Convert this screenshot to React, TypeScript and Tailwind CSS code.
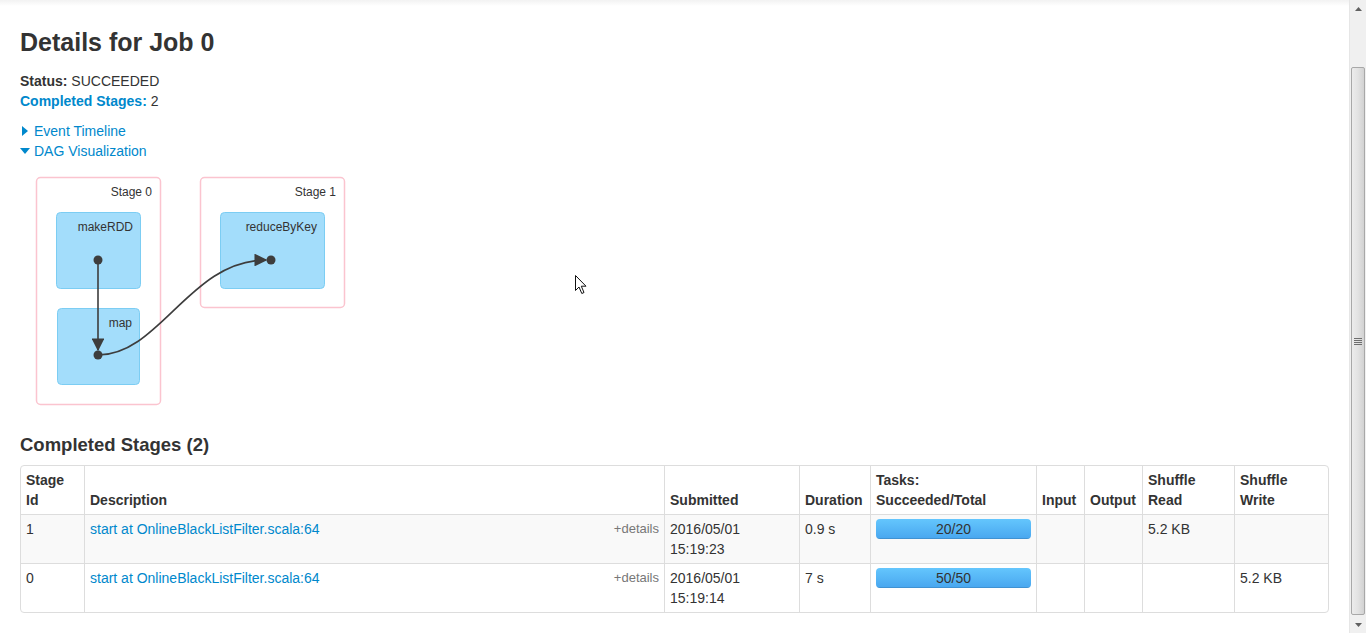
import React from 'react';

/**
 * Spark UI - job details page, scrolled a little so the navbar shadow shows.
 */

type Stage = {
  id: string;
  desc: string;
  submitted: [string, string];
  duration: string;
  done: number;
  total: number;
  shuffleRead: string;
  shuffleWrite: string;
};

const stages: Stage[] = [
  {
    id: '1',
    desc: 'start at OnlineBlackListFilter.scala:64',
    submitted: ['2016/05/01', '15:19:23'],
    duration: '0.9 s',
    done: 20,
    total: 20,
    shuffleRead: '5.2 KB',
    shuffleWrite: '',
  },
  {
    id: '0',
    desc: 'start at OnlineBlackListFilter.scala:64',
    submitted: ['2016/05/01', '15:19:14'],
    duration: '7 s',
    done: 50,
    total: 50,
    shuffleRead: '',
    shuffleWrite: '5.2 KB',
  },
];

function DagViz() {
  return (
    <svg width="340" height="240" viewBox="20 170 340 240" className="block">
      <defs>
        <marker id="arrow" viewBox="0 0 10 10" refX="9" refY="5" markerWidth="8" markerHeight="8" orient="auto">
          <path d="M0,0 L10,5 L0,10 z" fill="#3d3d3d" />
        </marker>
      </defs>
      {/* stage clusters */}
      <rect x="36.5" y="177.5" width="124" height="227" rx="4" fill="white" stroke="#fbc4cf" strokeWidth="1.5" />
      <rect x="200.5" y="177.5" width="144" height="130" rx="4" fill="white" stroke="#fbc4cf" strokeWidth="1.5" />
      <text x="152" y="195.5" textAnchor="end" fontSize="12" fill="#333">Stage 0</text>
      <text x="336" y="195.5" textAnchor="end" fontSize="12" fill="#333">Stage 1</text>

      {/* rdd nodes */}
      <rect x="56.5" y="212.5" width="84" height="76" rx="4" fill="#a3ddfb" stroke="#7ccdf3" />
      <rect x="57.5" y="308.5" width="82" height="76" rx="4" fill="#a3ddfb" stroke="#7ccdf3" />
      <rect x="220.5" y="212.5" width="104" height="76" rx="4" fill="#a3ddfb" stroke="#7ccdf3" />
      <text x="133" y="231" textAnchor="end" fontSize="12" fill="#333">makeRDD</text>
      <text x="132" y="327" textAnchor="end" fontSize="12" fill="#333">map</text>
      <text x="317" y="231" textAnchor="end" fontSize="12" fill="#333">reduceByKey</text>

      {/* edges */}
      <path d="M98,260 L98,350" stroke="#3d3d3d" strokeWidth="1.6" fill="none" markerEnd="url(#arrow)" />
      <path d="M98,355 C160,355 190,260 266,260" stroke="#3d3d3d" strokeWidth="1.6" fill="none" markerEnd="url(#arrow)" />
      <circle cx="98" cy="260" r="4.5" fill="#3d3d3d" />
      <circle cx="98" cy="355" r="4.5" fill="#3d3d3d" />
      <circle cx="271" cy="260" r="4.5" fill="#3d3d3d" />
    </svg>
  );
}

function Caret({ open }: { open: boolean }) {
  return (
    <span className="inline-flex w-[14px] items-center">
      {open ? (
        <svg width="10" height="6" viewBox="0 0 10 6">
          <path d="M0,0 L10,0 L5,6 z" fill="#0088cc" />
        </svg>
      ) : (
        <svg width="6" height="10" viewBox="0 0 6 10" className="ml-[2px]">
          <path d="M0,0 L6,5 L0,10 z" fill="#0088cc" />
        </svg>
      )}
    </span>
  );
}

function ProgressBar({ done, total }: { done: number; total: number }) {
  return (
    <div className="relative h-[20px] rounded-[4px] overflow-hidden bg-[#f5f5f5]">
      <div
        className="h-full bg-gradient-to-b from-[#64c6fd] to-[#48a6ef] shadow-[inset_0_-1px_0_rgba(0,0,0,0.12)]"
        style={{ width: `${(done / total) * 100}%` }}
      />
      <span className="absolute inset-0 text-center leading-[20px] text-[#333]">
        {done}/{total}
      </span>
    </div>
  );
}

function Scrollbar() {
  return (
    <div className="w-[17px] h-full flex flex-col bg-[#f0f0f0] border-l border-[#e6e6e6]">
      <div className="h-[17px] flex items-center justify-center">
        <svg width="7" height="4" viewBox="0 0 7 4">
          <path d="M0,4 L3.5,0 L7,4 z" fill="#606060" />
        </svg>
      </div>
      <div className="flex-1 flex flex-col">
        <div className="h-[50px]" />
        <div className="flex-1 mx-[1px] mb-[1px] rounded-[2px] border border-[#a8a8a8] bg-gradient-to-r from-[#ececec] via-[#e2e2e2] to-[#d2d2d2] flex items-center justify-center">
          <div className="flex flex-col gap-[1px]">
            <div className="w-[8px] h-[1px] bg-[#6e6e6e]" />
            <div className="w-[8px] h-[1px] bg-[#6e6e6e]" />
            <div className="w-[8px] h-[1px] bg-[#6e6e6e]" />
            <div className="w-[8px] h-[1px] bg-[#6e6e6e]" />
          </div>
        </div>
      </div>
      <div className="h-[17px] flex items-center justify-center">
        <svg width="7" height="4" viewBox="0 0 7 4">
          <path d="M0,0 L3.5,4 L7,0 z" fill="#606060" />
        </svg>
      </div>
    </div>
  );
}

export default function App() {
  const th = 'border-l border-[#ddd] px-[5px] py-[4px] text-left align-bottom font-bold leading-[20px]';
  const td = 'border-l border-t border-[#ddd] px-[5px] py-[4px] align-top leading-[20px]';

  return (
    <div
      className="relative flex w-[1366px] h-[633px] overflow-hidden bg-white text-[14px] text-[#333]"
      style={{ fontFamily: '"Liberation Sans", Arial, sans-serif' }}
    >
      <div className="flex-1 min-w-0">
        <div className="h-[6px] bg-gradient-to-b from-[#f2f2f2] to-white" />
        <div className="px-[20px]">
          <h3 className="mt-[16px] text-[25px] font-bold leading-[40px]">Details for Job 0</h3>

          <ul className="mt-[9px] leading-[20px]">
            <li>
              <strong>Status:</strong> SUCCEEDED
            </li>
            <li>
              <a className="font-bold text-[#0088cc]">Completed Stages:</a> 2
            </li>
          </ul>

          <div className="mt-[10px] leading-[20px] text-[#0088cc]">
            <div className="flex items-center">
              <Caret open={false} />
              <span>Event Timeline</span>
            </div>
            <div className="flex items-center">
              <Caret open={true} />
              <span>DAG Visualization</span>
            </div>
          </div>

          <div className="mt-[9px]">
            <DagViz />
          </div>

          <h4 className="mt-[25px] text-[18.5px] font-bold leading-[20px]">Completed Stages (2)</h4>

          <table className="mt-[10px] w-full table-fixed border-separate border-spacing-0 border border-[#ddd] rounded-[4px]">
            <colgroup>
              <col className="w-[63px]" />
              <col className="w-[580px]" />
              <col className="w-[135px]" />
              <col className="w-[71px]" />
              <col className="w-[166px]" />
              <col className="w-[48px]" />
              <col className="w-[58px]" />
              <col className="w-[92px]" />
              <col />
            </colgroup>
            <thead>
              <tr>
                <th className={th + ' border-l-0'}>
                  Stage
                  <br />
                  Id
                </th>
                <th className={th}>Description</th>
                <th className={th}>Submitted</th>
                <th className={th}>Duration</th>
                <th className={th}>
                  Tasks:
                  <br />
                  Succeeded/Total
                </th>
                <th className={th}>Input</th>
                <th className={th}>Output</th>
                <th className={th}>
                  Shuffle
                  <br />
                  Read
                </th>
                <th className={th}>
                  Shuffle
                  <br />
                  Write
                </th>
              </tr>
            </thead>
            <tbody>
              {stages.map((s, i) => (
                <tr key={s.id} className={i % 2 === 0 ? 'bg-[#f9f9f9]' : ''}>
                  <td className={td + ' border-l-0'}>{s.id}</td>
                  <td className={td}>
                    <span className="float-right text-[13px] text-[#777]">+details</span>
                    <a className="text-[#0088cc]">{s.desc}</a>
                  </td>
                  <td className={td}>
                    {s.submitted[0]}
                    <br />
                    {s.submitted[1]}
                  </td>
                  <td className={td}>{s.duration}</td>
                  <td className={td}>
                    <ProgressBar done={s.done} total={s.total} />
                  </td>
                  <td className={td}></td>
                  <td className={td}></td>
                  <td className={td}>{s.shuffleRead}</td>
                  <td className={td}>{s.shuffleWrite}</td>
                </tr>
              ))}
            </tbody>
          </table>
        </div>
      </div>

      <Scrollbar />

      {/* mouse pointer */}
      <svg className="absolute left-[575px] top-[275px]" width="13" height="20" viewBox="0 0 13 20">
        <path d="M0.5,0.5 L0.5,15.5 L4,12 L6.8,18.5 L9,17.5 L6.3,11.2 L11,11.2 Z" fill="white" stroke="#111" strokeWidth="1" />
      </svg>
    </div>
  );
}
